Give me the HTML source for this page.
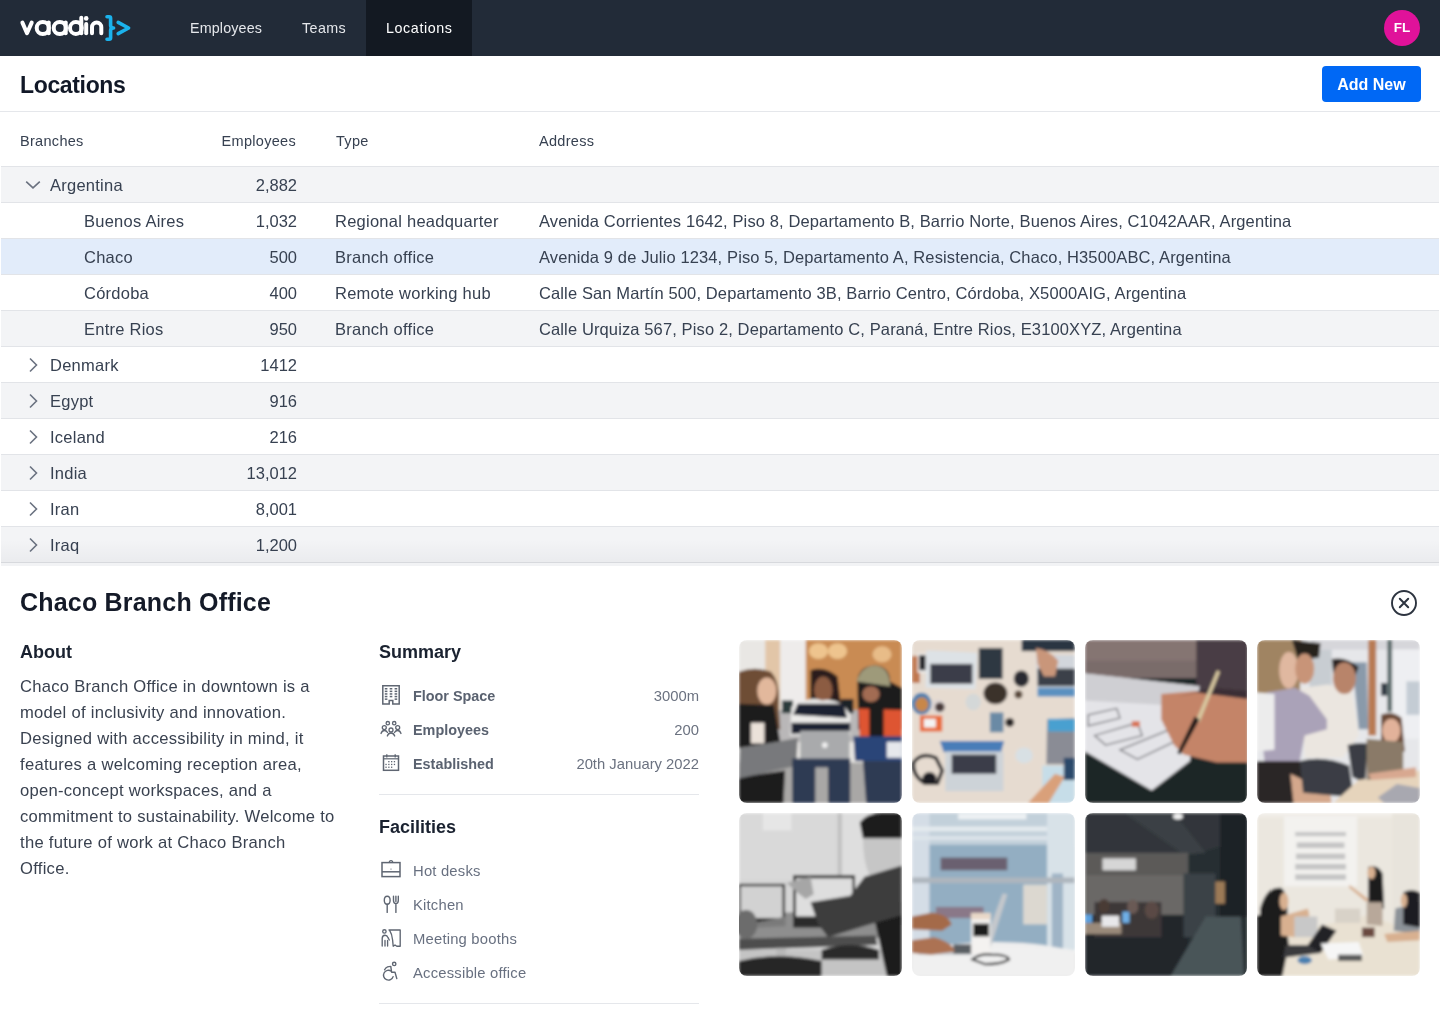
<!DOCTYPE html>
<html><head><meta charset="utf-8">
<style>
*{box-sizing:border-box;margin:0;padding:0}
html,body{width:1440px;height:1024px;overflow:hidden;background:#fff}
body{font-family:"Liberation Sans",sans-serif;color:#1f2937;position:relative}
.abs{position:absolute}
#nav{position:absolute;left:0;top:0;width:1440px;height:56px;background:#222b38}
.tab{position:absolute;top:0;height:56px;line-height:56px;color:#e5e7eb;font-size:14.3px;white-space:nowrap}
.tab.active{background:#131922;color:#fff}
#avatar{position:absolute;left:1384px;top:10px;width:36px;height:36px;border-radius:50%;background:#e0129a;color:#fff;font-size:13.5px;font-weight:700;line-height:36px;text-align:center}
#hdr{position:absolute;left:0;top:56px;width:1440px;height:56px;border-bottom:1px solid #e5e7eb}
#title{position:absolute;left:20px;top:15.5px;font-size:23px;letter-spacing:-0.35px;font-weight:700;color:#111827;white-space:nowrap}
#addnew{position:absolute;left:1322px;top:10px;width:99px;height:36px;border-radius:4px;background:#0068f5;color:#fff;font-size:16px;font-weight:700;line-height:38px;text-align:center}
#thead{position:absolute;left:0;top:112px;width:1440px;height:54px}
.th{position:absolute;top:2px;line-height:54px;font-size:14.5px;letter-spacing:0.3px;color:#374151;white-space:nowrap}
.row{position:absolute;left:1px;width:1438px;height:36px;border-top:1px solid #e2e4e8}
.row.g{background:#f3f4f6}
.row.sel{background:#e2ecfa}
.c{position:absolute;top:1px;line-height:35px;font-size:16.5px;letter-spacing:0.25px;color:#374151;white-space:nowrap}
.num{text-align:right}

#detail{position:absolute;left:0;top:563px;width:1440px;height:461px}
#dtitle{position:absolute;left:20px;top:25px;font-size:25px;letter-spacing:0.2px;font-weight:700;color:#141a28;white-space:nowrap}
.h3{position:absolute;font-size:18px;font-weight:700;color:#1a2230;white-space:nowrap}
#about{position:absolute;left:20px;top:111px;width:340px;font-size:16.6px;letter-spacing:0.27px;line-height:26px;color:#3a4250;white-space:nowrap}
.srow{position:absolute;left:379px;width:320px;height:34px}
.slabel{position:absolute;left:34px;top:1px;font-size:14.4px;font-weight:700;color:#5a6270;white-space:nowrap;line-height:34px}
.sval{position:absolute;right:0px;top:1px;font-size:14.8px;color:#6b7280;white-space:nowrap;line-height:34px}
.flabel{position:absolute;left:34px;top:1px;font-size:14.8px;letter-spacing:0.2px;color:#687080;white-space:nowrap;line-height:34px}
.divider{position:absolute;left:379px;width:320px;height:1px;background:#e5e7eb}
.ph{position:absolute;width:163px;height:163px;border-radius:8px;overflow:hidden}
</style></head>
<body>
<div id="root" style="position:absolute;left:0;top:0;width:1440px;height:1024px;overflow:hidden;will-change:transform">
<div id="nav">
  <svg class="abs" style="left:0;top:0" width="140" height="56" viewBox="0 0 140 56">
<g fill="none" stroke="#fff" stroke-width="4" stroke-linecap="round" stroke-linejoin="round">
<path d="M22.4 22.6 L27 33.2 L31.7 22.6"/>
<circle cx="42.8" cy="28" r="6.1"/><path d="M48.7 22.6 V33.2"/>
<circle cx="59.8" cy="28" r="6.1"/><path d="M65.7 22.6 V33.2"/>
<circle cx="75.9" cy="28" r="5.9"/><path d="M81.3 17.8 V33.2"/>
<path d="M86.2 24 V33.2"/>
<path d="M92 33.2 V27.2 A4.65 4.65 0 0 1 101.3 27.2 V33.2"/>
</g>
<circle cx="86.2" cy="18.4" r="2.3" fill="#fff"/>
<g fill="none" stroke="#1bb2ec" stroke-width="3.6" stroke-linecap="round" stroke-linejoin="round">
<path d="M107 16.8 H109.2 Q110.6 16.8 110.6 18.2 V25.6 Q110.6 28 113.6 28 Q110.6 28 110.6 30.4 V37.8 Q110.6 39.2 109.2 39.2 H107"/>
<path d="M118.2 22.4 L128.6 28 L118.2 33.6"/>
</g></svg>
  <div class="tab" style="left:170px;width:112px;padding-left:20px;letter-spacing:0.15px">Employees</div>
  <div class="tab" style="left:282px;width:84px;padding-left:20px;letter-spacing:0.4px">Teams</div>
  <div class="tab active" style="left:366px;width:106px;padding-left:20px;letter-spacing:0.6px">Locations</div>
  <div id="avatar">FL</div>
</div>
<div id="hdr">
  <div id="title">Locations</div>
  <div id="addnew">Add New</div>
</div>
<div id="thead">
  <div class="th" style="left:20px">Branches</div>
  <div class="th" style="left:196px;width:100px;text-align:right">Employees</div>
  <div class="th" style="left:336px">Type</div>
  <div class="th" style="left:539px">Address</div>
</div>
<div id="rows">
<div class="row g" style="top:166px"><svg class="abs" style="left:23px;top:11.5px" width="18" height="12" viewBox="0 0 18 12"><path d="M2.2 2.6 L9 8.8 L15.8 2.6" fill="none" stroke="#6b7280" stroke-width="1.6"/></svg><div class="c" style="left:49px">Argentina</div><div class="c num" style="left:196px;width:100px;letter-spacing:0">2,882</div></div>
<div class="row " style="top:202px"><div class="c" style="left:83px">Buenos Aires</div><div class="c num" style="left:196px;width:100px;letter-spacing:0">1,032</div><div class="c" style="left:334px">Regional headquarter</div><div class="c" style="left:538px;letter-spacing:0.12px">Avenida Corrientes 1642, Piso 8, Departamento B, Barrio Norte, Buenos Aires, C1042AAR, Argentina</div></div>
<div class="row sel" style="top:238px"><div class="c" style="left:83px">Chaco</div><div class="c num" style="left:196px;width:100px;letter-spacing:0">500</div><div class="c" style="left:334px">Branch office</div><div class="c" style="left:538px;letter-spacing:0.12px">Avenida 9 de Julio 1234, Piso 5, Departamento A, Resistencia, Chaco, H3500ABC, Argentina</div></div>
<div class="row " style="top:274px"><div class="c" style="left:83px">Córdoba</div><div class="c num" style="left:196px;width:100px;letter-spacing:0">400</div><div class="c" style="left:334px">Remote working hub</div><div class="c" style="left:538px;letter-spacing:0.12px">Calle San Martín 500, Departamento 3B, Barrio Centro, Córdoba, X5000AIG, Argentina</div></div>
<div class="row g" style="top:310px"><div class="c" style="left:83px">Entre Rios</div><div class="c num" style="left:196px;width:100px;letter-spacing:0">950</div><div class="c" style="left:334px">Branch office</div><div class="c" style="left:538px;letter-spacing:0.12px">Calle Urquiza 567, Piso 2, Departamento C, Paraná, Entre Rios, E3100XYZ, Argentina</div></div>
<div class="row " style="top:346px"><svg class="abs" style="left:26px;top:8.5px" width="12" height="18" viewBox="0 0 12 18"><path d="M3 2.5 L9.5 9 L3 15.5" fill="none" stroke="#6b7280" stroke-width="1.6"/></svg><div class="c" style="left:49px">Denmark</div><div class="c num" style="left:196px;width:100px;letter-spacing:0">1412</div></div>
<div class="row g" style="top:382px"><svg class="abs" style="left:26px;top:8.5px" width="12" height="18" viewBox="0 0 12 18"><path d="M3 2.5 L9.5 9 L3 15.5" fill="none" stroke="#6b7280" stroke-width="1.6"/></svg><div class="c" style="left:49px">Egypt</div><div class="c num" style="left:196px;width:100px;letter-spacing:0">916</div></div>
<div class="row " style="top:418px"><svg class="abs" style="left:26px;top:8.5px" width="12" height="18" viewBox="0 0 12 18"><path d="M3 2.5 L9.5 9 L3 15.5" fill="none" stroke="#6b7280" stroke-width="1.6"/></svg><div class="c" style="left:49px">Iceland</div><div class="c num" style="left:196px;width:100px;letter-spacing:0">216</div></div>
<div class="row g" style="top:454px"><svg class="abs" style="left:26px;top:8.5px" width="12" height="18" viewBox="0 0 12 18"><path d="M3 2.5 L9.5 9 L3 15.5" fill="none" stroke="#6b7280" stroke-width="1.6"/></svg><div class="c" style="left:49px">India</div><div class="c num" style="left:196px;width:100px;letter-spacing:0">13,012</div></div>
<div class="row " style="top:490px"><svg class="abs" style="left:26px;top:8.5px" width="12" height="18" viewBox="0 0 12 18"><path d="M3 2.5 L9.5 9 L3 15.5" fill="none" stroke="#6b7280" stroke-width="1.6"/></svg><div class="c" style="left:49px">Iran</div><div class="c num" style="left:196px;width:100px;letter-spacing:0">8,001</div></div>
<div class="row g" style="top:526px"><svg class="abs" style="left:26px;top:8.5px" width="12" height="18" viewBox="0 0 12 18"><path d="M3 2.5 L9.5 9 L3 15.5" fill="none" stroke="#6b7280" stroke-width="1.6"/></svg><div class="c" style="left:49px">Iraq</div><div class="c num" style="left:196px;width:100px;letter-spacing:0">1,200</div></div>
<div class="abs" style="left:1px;top:540px;width:1438px;height:22px;background:linear-gradient(rgba(0,0,30,0),rgba(0,0,30,0.035))"></div><div class="abs" style="left:1px;top:562px;width:1438px;height:1px;background:#d7d9dd"></div><div class="abs" style="left:1px;top:563px;width:1438px;height:3px;background:#f2f3f5"></div></div>
<div id="detail">
  <div id="dtitle">Chaco Branch Office</div>
  <svg class="abs" style="left:1390px;top:26px" width="28" height="28" viewBox="0 0 28 28"><circle cx="14" cy="14" r="12" fill="none" stroke="#2d3440" stroke-width="1.9"/><path d="M9.8 9.8 L18.2 18.2 M18.2 9.8 L9.8 18.2" stroke="#2d3440" stroke-width="2" stroke-linecap="round"/></svg>
  <div class="h3" style="left:20px;top:79px">About</div>
  <div id="about">Chaco Branch Office in downtown is a<br>model of inclusivity and innovation.<br>Designed with accessibility in mind, it<br>features a welcoming reception area,<br>open-concept workspaces, and a<br>commitment to sustainability. Welcome to<br>the future of work at Chaco Branch<br>Office.</div>
  <div class="h3" style="left:379px;top:79px">Summary</div>
  <div class="srow" style="top:115px"><div class="slabel">Floor Space</div><div class="sval">3000m</div></div>
  <div class="srow" style="top:149px"><div class="slabel">Employees</div><div class="sval">200</div></div>
  <div class="srow" style="top:183px"><div class="slabel">Established</div><div class="sval">20th January 2022</div></div>
  <div class="divider" style="top:231px"></div>
  <div class="h3" style="left:379px;top:254px">Facilities</div>
  <div class="srow" style="top:290px"><div class="flabel">Hot desks</div></div>
  <div class="srow" style="top:324px"><div class="flabel">Kitchen</div></div>
  <div class="srow" style="top:358px"><div class="flabel">Meeting booths</div></div>
  <div class="srow" style="top:392px"><div class="flabel">Accessible office</div></div>
  <div class="divider" style="top:440px"></div>
  
<svg class="abs" style="left:376px;top:117px" width="30" height="100" viewBox="376 680 30 100">
<g fill="none" stroke="#5f6672" stroke-width="1.5">
<path d="M389.2 704 V700.6 H392.8 V704 H399.2 V685.8 H382.8 V704 Z"/>
</g>
<g fill="#5f6672"><rect x="384.8" y="688" width="2.6" height="1.5"/><rect x="389.7" y="688" width="2.6" height="1.5"/><rect x="394.6" y="688" width="2.6" height="1.5"/><rect x="384.8" y="690.6" width="2.6" height="1.5"/><rect x="389.7" y="690.6" width="2.6" height="1.5"/><rect x="394.6" y="690.6" width="2.6" height="1.5"/><rect x="384.8" y="693.2" width="2.6" height="1.5"/><rect x="389.7" y="693.2" width="2.6" height="1.5"/><rect x="394.6" y="693.2" width="2.6" height="1.5"/><rect x="384.8" y="695.8" width="2.6" height="1.5"/><rect x="389.7" y="695.8" width="2.6" height="1.5"/><rect x="394.6" y="695.8" width="2.6" height="1.5"/><rect x="384.8" y="698.4" width="2.6" height="1.5"/><rect x="394.6" y="698.4" width="2.6" height="1.5"/></g>
<g fill="none" stroke="#5f6672" stroke-width="1.3" stroke-linecap="round">
<circle cx="387.8" cy="723.2" r="1.7"/><circle cx="394.2" cy="723.2" r="1.7"/>
<circle cx="384.3" cy="727.6" r="2"/><circle cx="397.7" cy="727.6" r="2"/><circle cx="391" cy="730" r="2"/>
<path d="M381 733.5 Q382 730.5 384.3 730.5 Q386.5 730.5 387.5 732.5"/>
<path d="M401 733.5 Q400 730.5 397.7 730.5 Q395.5 730.5 394.5 732.5"/>
<path d="M387.3 736 Q388.3 733 391 733 Q393.7 733 394.7 736"/>
</g>
<g fill="none" stroke="#5f6672" stroke-width="1.5">
<rect x="383.5" y="756" width="15" height="14.3"/>
<path d="M383.5 758.8 H398.5" stroke-width="1.2"/>
<path d="M386.8 754.2 V757.5 M395.2 754.2 V757.5" stroke-width="1.3"/>
</g>
<g fill="#5f6672">
<rect x="388.2" y="761" width="1.3" height="1.3"/><rect x="391" y="761" width="1.3" height="1.3"/><rect x="393.8" y="761" width="1.3" height="1.3"/>
<rect x="385.4" y="763.8" width="1.3" height="1.3"/><rect x="388.2" y="763.8" width="1.3" height="1.3"/><rect x="391" y="763.8" width="1.3" height="1.3"/><rect x="393.8" y="763.8" width="1.3" height="1.3"/>
<rect x="385.4" y="766.6" width="1.3" height="1.3"/><rect x="388.2" y="766.6" width="1.3" height="1.3"/><rect x="391" y="766.6" width="1.3" height="1.3"/>
</g>
</svg>
<svg class="abs" style="left:376px;top:292px" width="30" height="135" viewBox="376 855 30 135">
<g fill="none" stroke="#5f6672" stroke-width="1.5" stroke-linejoin="miter">
<rect x="382" y="862.6" width="18" height="14"/>
<path d="M382 871.8 H400"/>
<path d="M389.3 862.6 Q389.3 860.6 391 860.6 Q392.7 860.6 392.7 862.6" stroke-width="1.3"/>
</g>
<rect x="390.5" y="868.6" width="1" height="1" fill="#5f6672"/>
<g fill="none" stroke="#5f6672" stroke-width="1.4" stroke-linecap="round" stroke-linejoin="round">
<ellipse cx="387.2" cy="900.3" rx="2.9" ry="4"/>
<path d="M387.2 904.3 V912.4"/>
<path d="M395.9 903.6 V912.4 M393.5 896.3 V900.6 Q393.5 903.6 395.9 903.6 Q398.3 903.6 398.3 900.6 V896.3 M395.9 896.3 V901.5"/>
</g>
<g fill="none" stroke="#5f6672" stroke-width="1.35" stroke-linecap="round" stroke-linejoin="round">
<circle cx="384.4" cy="931.4" r="1.7"/>
<path d="M382.2 946 V938.5 Q382.2 935.2 385 935.2 Q387.2 935.2 388 937.6 L389.3 940"/>
<path d="M385 940.5 V946 M387.6 940.5 V946"/>
<path d="M389 930 H400.2 V946.2 H396.8 L395 945 L393.2 946.2 L392.6 940 Q392 934 389.5 930.2"/>
</g>
<g fill="none" stroke="#5f6672" stroke-width="1.4" stroke-linecap="round" stroke-linejoin="round">
<circle cx="394.2" cy="963.9" r="1.7"/>
<path d="M384.6 969.8 Q386.2 966.4 390.6 966.4"/>
<path d="M390.8 966.6 L391.6 972.2 H395 L396.8 978.6"/>
<path d="M391.3 971.2 A4.9 4.9 0 1 0 393.1 976.6"/>
</g>
</svg>
<div id="photos">
<div class="ph" style="left:739px;top:77px;width:162.75px"><svg width="100%" height="100%" viewBox="0 0 1024 1024" preserveAspectRatio="none"><defs><filter id="b0" x="-5%" y="-5%" width="110%" height="110%"><feGaussianBlur stdDeviation="9"/></filter></defs><g filter="url(#b0)"><rect width="1024" height="1024" fill="#e9e7e4"/>
<rect x="165" y="0" width="95" height="450" fill="#e2c6a8"/>
<rect x="260" y="0" width="160" height="450" fill="#eeeceb"/>
<rect x="420" y="0" width="604" height="460" fill="#c98b52"/>
<ellipse cx="500" cy="70" rx="60" ry="50" fill="#eec48e"/>
<ellipse cx="620" cy="70" rx="60" ry="50" fill="#eec48e"/>
<ellipse cx="900" cy="90" rx="60" ry="50" fill="#e8bc88"/>
<rect x="240" y="440" width="540" height="200" fill="#b9b7b8"/>
<rect x="270" y="380" width="70" height="80" fill="#2c3a3a"/>
<rect x="640" y="370" width="80" height="90" fill="#1e2226"/>
<rect x="0" y="770" width="1024" height="254" fill="#a9a7a6"/>
<path d="M0 200 Q100 160 200 200 Q260 260 250 420 L260 560 L0 560 Z" fill="#6e4d36"/>
<ellipse cx="175" cy="320" rx="60" ry="85" fill="#e2b89c"/>
<path d="M0 400 L220 410 L260 640 L0 680 Z" fill="#1f1c1e"/>
<rect x="75" y="520" width="85" height="130" fill="#ebe2d9"/>
<path d="M0 860 L290 820 L280 1024 L0 1024 Z" fill="#1d1b1f"/>
<path d="M5 680 L370 615 L360 790 L0 870 Z" fill="#78797c"/>
<path d="M450 190 Q540 160 620 230 L640 400 L450 400 Z" fill="#2a1f1a"/>
<ellipse cx="530" cy="315" rx="58" ry="85" fill="#8c5c42"/>
<path d="M330 420 Q440 350 520 380 Q640 360 700 470 L700 600 L320 600 Z" fill="#ecebe9"/>
<path d="M370 400 L660 400 L680 490 L340 470 Z" fill="#1e2030"/>
<path d="M330 520 L700 520 L700 570 L330 590 Z" fill="#1e2030"/>
<rect x="385" y="570" width="310" height="175" fill="#a9aaac"/>
<circle cx="540" cy="660" r="18" fill="#f0f0f0"/>
<path d="M335 745 L700 745 L700 1024 L335 1024 Z" fill="#2f3a52"/><rect x="480" y="800" width="80" height="224" fill="#a9a7a6"/>
<path d="M745 250 Q760 160 860 160 Q950 170 950 260 L1024 300 L1024 560 L750 560 Z" fill="#1c1a1c"/>
<path d="M740 260 Q770 160 860 160 Q950 170 950 290 Z" fill="#9e9a7a"/>
<ellipse cx="830" cy="340" rx="55" ry="50" fill="#a26c52"/>
<path d="M750 430 L1024 440 L1024 610 L760 610 Z" fill="#de5530"/>
<rect x="820" y="420" width="90" height="190" fill="#1a1a1c"/>
<path d="M720 605 L1024 605 L1024 765 L730 760 Z" fill="#2c4578"/>
<rect x="930" y="640" width="94" height="100" fill="#e6e8ec"/>
<path d="M780 760 L1024 760 L1024 1024 L800 1024 Z" fill="#2f3a52"/>
</g></svg></div>
<div class="ph" style="left:911.75px;top:77px;width:162.75px"><svg width="100%" height="100%" viewBox="0 0 1024 1024" preserveAspectRatio="none"><defs><filter id="b1" x="-5%" y="-5%" width="110%" height="110%"><feGaussianBlur stdDeviation="9"/></filter></defs><g filter="url(#b1)"><rect width="1024" height="1024" fill="#e6dbd0"/>
<rect x="690" y="0" width="334" height="70" fill="#2c3442"/>
<rect x="0" y="100" width="50" height="170" fill="#c07850"/>
<rect x="35" y="85" width="60" height="120" fill="#f0f0f0"/>
<rect x="45" y="95" width="40" height="95" fill="#222428"/>
<path d="M90 65 L410 80 L400 310 L85 300 Z" fill="#dde2e6"/>
<rect x="115" y="150" width="265" height="125" fill="#3a3e48"/>
<rect x="420" y="50" width="150" height="195" fill="#2e3742"/>
<ellipse cx="525" cy="335" rx="75" ry="68" fill="#3a302c"/>
<ellipse cx="688" cy="243" rx="48" ry="52" fill="#2a2a30"/>
<ellipse cx="670" cy="343" rx="25" ry="25" fill="#5a4a3a"/>
<path d="M780 95 L1024 95 L1024 360 L790 350 Z" fill="#d2d6dc"/>
<rect x="790" y="180" width="234" height="110" fill="#3a3f4a"/>
<rect x="790" y="300" width="234" height="55" fill="#5a90c0"/>
<path d="M780 50 Q860 60 920 130 L900 230 L830 230 L790 150 Z" fill="#c9967a"/>
<ellipse cx="385" cy="390" rx="48" ry="52" fill="#d4d8d8"/>
<ellipse cx="60" cy="400" rx="62" ry="68" fill="#4a7fb0"/>
<ellipse cx="62" cy="405" rx="42" ry="45" fill="#c8874a"/>
<ellipse cx="165" cy="418" rx="45" ry="45" fill="#ded6d4"/>
<ellipse cx="175" cy="422" rx="30" ry="30" fill="#4a3a3a"/>
<rect x="50" y="475" width="140" height="100" fill="#e86a38"/>
<rect x="75" y="495" width="75" height="55" fill="#f4f4f4"/>
<rect x="490" y="455" width="85" height="125" fill="#6a8aa5"/>
<ellipse cx="615" cy="518" rx="28" ry="28" fill="#2a2626"/>
<path d="M175 635 L580 635 L560 705 L200 705 Z" fill="#4a7db8"/>
<rect x="210" y="700" width="365" height="250" fill="#cdd3d8"/>
<rect x="250" y="720" width="280" height="120" fill="#3a3e48"/>
<path d="M10 770 Q60 700 150 740 L190 820 L160 900 L80 900 Q0 850 10 770 Z" fill="none" stroke="#1e1e20" stroke-width="22"/>
<ellipse cx="110" cy="870" rx="45" ry="40" fill="#1e1e20"/>
<path d="M850 500 L1024 490 L1024 780 L845 780 Z" fill="#8a8c95"/>
<rect x="855" y="495" width="169" height="80" fill="#4aa0d0"/>
<rect x="820" y="790" width="204" height="234" fill="#c6dde8"/>
<path d="M730 1024 L900 840 L960 860 L860 1024 Z" fill="#d9a07a"/>
<rect x="955" y="740" width="69" height="140" fill="#2a4a6a"/>
<ellipse cx="705" cy="725" rx="55" ry="50" fill="#d8e0e4"/>
</g></svg></div>
<div class="ph" style="left:1084.5px;top:77px;width:162.75px"><svg width="100%" height="100%" viewBox="0 0 1024 1024" preserveAspectRatio="none"><defs><filter id="b2" x="-5%" y="-5%" width="110%" height="110%"><feGaussianBlur stdDeviation="9"/></filter></defs><g filter="url(#b2)"><rect width="1024" height="1024" fill="#1f2528"/>
<rect x="0" y="0" width="1024" height="240" fill="#7a6c6a"/>
<rect x="0" y="0" width="700" height="130" fill="#857572"/>
<rect x="700" y="0" width="324" height="360" fill="#4a3c44"/>
<path d="M0 210 L720 290 L660 760 L420 945 L0 700 Z" fill="#e4e4e8"/>
<path d="M0 210 L720 290 L700 420 L0 380 Z" fill="#cfcfd3"/>
<g fill="none" stroke="#6a6a70" stroke-width="8">
<path d="M60 600 L330 520 L360 600 L130 660 Z"/>
<path d="M220 690 L540 560 L560 640 L330 750 Z"/>
<path d="M20 470 L200 430 L220 490 L20 540 Z"/>
</g>
<rect x="295" y="510" width="50" height="35" fill="#d87050"/>
<path d="M480 340 L700 320 L1024 330 L1024 770 L830 770 L620 720 L560 660 L480 500 Z" fill="#c48468"/>
<path d="M580 360 L800 300 L1024 320 L1024 370 L700 330 Z" fill="#3a2e36"/>
<path d="M850 200 L720 520 L700 500 L830 190 Z" fill="#d8c8a0"/>
<path d="M720 500 L600 720 L580 710 L690 480 Z" fill="#121418"/>
</g></svg></div>
<div class="ph" style="left:1257.25px;top:77px;width:162.75px"><svg width="100%" height="100%" viewBox="0 0 1024 1024" preserveAspectRatio="none"><defs><filter id="b3" x="-5%" y="-5%" width="110%" height="110%"><feGaussianBlur stdDeviation="9"/></filter></defs><g filter="url(#b3)"><rect width="1024" height="1024" fill="#e6e7ea"/>
<rect x="340" y="0" width="684" height="60" fill="#d6d6da"/>
<rect x="850" y="60" width="174" height="560" fill="#eeeff2"/>
<rect x="940" y="260" width="84" height="210" fill="#c4ccd4"/>
<rect x="780" y="270" width="40" height="80" fill="#303a44"/>
<path d="M600 140 L690 140 L700 560 L640 560 Z" fill="#8a9aaa"/>
<rect x="820" y="0" width="30" height="450" fill="#5a6a6a"/>
<rect x="700" y="0" width="50" height="600" fill="#b87a52"/>
<rect x="330" y="60" width="140" height="240" fill="#c8cdd2"/>
<path d="M0 0 L280 0 L270 330 L0 340 Z" fill="#a08462"/>
<ellipse cx="200" cy="190" rx="60" ry="115" fill="#e0b8a0"/>
<path d="M220 0 L400 20 L390 110 L260 130 Z" fill="#26221e"/>
<ellipse cx="300" cy="180" rx="60" ry="95" fill="#c89478"/>
<path d="M280 300 L450 280 L600 330 L640 600 L540 740 L300 740 Z" fill="#ebe6e0"/>
<path d="M470 120 Q560 100 640 170 L620 220 L480 210 Z" fill="#2a2420"/>
<ellipse cx="550" cy="240" rx="72" ry="100" fill="#b8846a"/>
<path d="M60 330 L240 300 L330 350 L440 500 L440 560 L300 600 L250 860 L60 860 L40 700 Z" fill="#aaa2b8"/>
<path d="M0 330 L110 340 L110 690 L0 700 Z" fill="#ececec"/>
<path d="M0 760 L300 760 L320 1024 L0 1024 Z" fill="#2a2628"/>
<path d="M210 840 L460 960 L470 1024 L230 1024 Z" fill="#d4a88c"/>
<path d="M270 760 Q420 720 580 790 L610 990 L290 960 Z" fill="#3a3e44"/>
<path d="M570 660 Q630 640 700 650 L680 900 L600 860 Z" fill="#3a3e44"/>
<path d="M480 1024 L640 880 L1024 820 L1024 1024 Z" fill="#e6d4bc"/>
<path d="M780 470 Q850 440 910 490 L930 700 L780 700 Z" fill="#6a4a38"/>
<ellipse cx="845" cy="570" rx="58" ry="75" fill="#e2b29a"/>
<path d="M690 620 L920 640 L920 850 L690 880 Z" fill="#8a7a68"/>
<path d="M700 840 L1000 800 L1000 860 L720 880 Z" fill="#d8a890"/>
<path d="M760 990 L880 905 L1024 930 L1024 1024 L800 1024 Z" fill="#a8a8b0"/>
</g></svg></div>
<div class="ph" style="left:739px;top:250px;width:162.75px"><svg width="100%" height="100%" viewBox="0 0 1024 1024" preserveAspectRatio="none"><defs><filter id="b4" x="-5%" y="-5%" width="110%" height="110%"><feGaussianBlur stdDeviation="9"/></filter></defs><g filter="url(#b4)"><rect width="1024" height="1024" fill="#d6d6d6"/>
<rect x="0" y="0" width="620" height="420" fill="#d9d9d9"/>
<rect x="150" y="0" width="180" height="110" fill="#e6e6e6"/>
<rect x="620" y="0" width="28" height="400" fill="#c2c2c2"/>
<rect x="648" y="0" width="376" height="450" fill="#dedede"/>
<rect x="0" y="860" width="1024" height="164" fill="#c4c4c4"/>
<path d="M0 640 L820 600 L1024 560 L1024 700 L860 790 L0 800 Z" fill="#8e8e8e"/>
<path d="M0 790 L860 770 L870 830 L0 860 Z" fill="#4e4e4e"/>
<rect x="235" y="850" width="60" height="174" fill="#b8b8b8"/>
<path d="M0 930 Q250 870 520 930 L520 1024 L0 1024 Z" fill="#262626"/>
<path d="M520 860 Q700 800 880 860 L880 920 L520 920 Z" fill="#2c2c2c"/>
<path d="M850 660 L1024 640 L1024 1024 L930 1024 Z" fill="#1e1e1e"/>
<rect x="0" y="445" width="290" height="265" fill="#262626"/>
<rect x="12" y="460" width="262" height="200" fill="#d2d2d2"/>
<path d="M100 690 L290 650 L290 710 L110 720 Z" fill="#7a7a7a"/>
<rect x="340" y="390" width="390" height="330" fill="#2a2a2a"/>
<rect x="358" y="410" width="356" height="240" fill="#dedede"/>
<path d="M760 60 Q800 0 900 0 L1024 0 L1024 160 L780 160 Z" fill="#1c1c1c"/>
<path d="M780 160 L1024 160 L1024 340 L900 400 L820 390 Q780 300 780 160 Z" fill="#c6c6c6"/>
<path d="M790 400 L1024 330 L1024 640 L820 700 L560 780 L500 700 L450 560 L700 520 Z" fill="#3e3e3e"/>
<path d="M300 440 L450 400 L470 510 L420 540 L380 510 Z" fill="#a6a6a6"/>
<ellipse cx="45" cy="700" rx="70" ry="90" fill="#6c6c6c"/>
</g></svg></div>
<div class="ph" style="left:911.75px;top:250px;width:162.75px"><svg width="100%" height="100%" viewBox="0 0 1024 1024" preserveAspectRatio="none"><defs><filter id="b5" x="-5%" y="-5%" width="110%" height="110%"><feGaussianBlur stdDeviation="9"/></filter></defs><g filter="url(#b5)"><rect width="1024" height="1024" fill="#93aec2"/>
<rect x="0" y="0" width="1024" height="200" fill="#c2d0da"/>
<rect x="0" y="0" width="110" height="1024" fill="#d4dde6"/>
<rect x="850" y="0" width="174" height="1024" fill="#d8e2e8"/>
<rect x="880" y="380" width="70" height="480" fill="#9fb4c6"/>
<rect x="290" y="5" width="430" height="35" fill="#eef2f4"/>
<rect x="0" y="85" width="850" height="30" fill="#e4eaee"/>
<rect x="0" y="145" width="850" height="25" fill="#dde4ea"/>
<rect x="180" y="280" width="420" height="80" fill="#6a6070"/>
<rect x="0" y="405" width="1024" height="35" fill="#aeb6be"/>
<rect x="700" y="450" width="150" height="250" fill="#dcd8d0"/>
<rect x="150" y="590" width="300" height="70" fill="#8a7888"/>
<ellipse cx="520" cy="960" rx="620" ry="150" fill="#eeeeee"/>
<path d="M0 1024 L0 900 Q500 800 1024 860 L1024 1024 Z" fill="#f0f0f0"/>
<path d="M40 890 L480 890 L600 510 L570 505 L450 830 L40 850 Z" fill="#c4c8cc"/>
<rect x="260" y="825" width="220" height="60" fill="#5a5e64"/>
<rect x="372" y="628" width="122" height="262" fill="#f4f2f0"/>
<rect x="372" y="628" width="122" height="40" fill="#e8d8c8"/>
<rect x="385" y="695" width="100" height="80" fill="#1a1a1a"/>
<path d="M0 650 L130 625 Q230 640 250 700 L190 740 L0 730 Z" fill="#a46a4a"/>
<path d="M0 800 L140 780 Q250 810 270 870 L120 890 L0 880 Z" fill="#ac7252"/>
<path d="M380 920 Q430 880 500 890 Q600 890 610 920 Q560 950 460 950 Z" fill="none" stroke="#2a2a2c" stroke-width="14"/>
</g></svg></div>
<div class="ph" style="left:1084.5px;top:250px;width:162.75px"><svg width="100%" height="100%" viewBox="0 0 1024 1024" preserveAspectRatio="none"><defs><filter id="b6" x="-5%" y="-5%" width="110%" height="110%"><feGaussianBlur stdDeviation="9"/></filter></defs><g filter="url(#b6)"><rect width="1024" height="1024" fill="#272e33"/>
<path d="M0 0 L1024 0 L1024 160 L680 260 L0 260 Z" fill="#30363a"/>
<path d="M250 0 L560 0 L760 250 L620 260 Z" fill="#3a4044"/>
<rect x="0" y="250" width="650" height="400" fill="#5c5a58"/>
<rect x="10" y="390" width="610" height="250" fill="#6a6866"/>
<rect x="110" y="285" width="210" height="75" fill="#d6d6d6"/>
<rect x="0" y="640" width="650" height="384" fill="#22282c"/>
<rect x="620" y="380" width="200" height="400" fill="#3a4246"/>
<path d="M540 1024 L760 650 L980 650 L1000 1024 Z" fill="#4a5458"/>
<rect x="850" y="0" width="174" height="650" fill="#1a2226"/>
<rect x="820" y="430" width="60" height="140" fill="#9c7a56"/>
<ellipse cx="585" cy="22" rx="32" ry="18" fill="#f4f4f4"/>
<rect x="60" y="560" width="420" height="220" fill="#3c3838"/>
<rect x="0" y="690" width="230" height="70" fill="#9a8a7a"/>
<rect x="105" y="645" width="110" height="70" fill="#e8e8ea"/>
<rect x="0" y="638" width="45" height="52" fill="#5aa0e0"/>
<rect x="235" y="620" width="45" height="70" fill="#70b0e8"/>
<ellipse cx="120" cy="585" rx="35" ry="45" fill="#4a3a34"/>
<ellipse cx="300" cy="590" rx="35" ry="45" fill="#6a5a54"/>
<ellipse cx="420" cy="610" rx="45" ry="55" fill="#5a4a44"/>
</g></svg></div>
<div class="ph" style="left:1257.25px;top:250px;width:162.75px"><svg width="100%" height="100%" viewBox="0 0 1024 1024" preserveAspectRatio="none"><defs><filter id="b7" x="-5%" y="-5%" width="110%" height="110%"><feGaussianBlur stdDeviation="9"/></filter></defs><g filter="url(#b7)"><rect width="1024" height="1024" fill="#ebe7df"/>
<rect x="0" y="0" width="1024" height="30" fill="#f0ece6"/>
<rect x="170" y="20" width="460" height="440" fill="#f3f2ef"/>
<g fill="#c4c4c4">
<rect x="240" y="120" width="320" height="25"/><rect x="250" y="185" width="300" height="35"/>
<rect x="245" y="255" width="310" height="35"/><rect x="240" y="320" width="320" height="35"/><rect x="240" y="385" width="320" height="35"/>
</g>
<rect x="850" y="0" width="174" height="700" fill="#e8e4dc"/>
<path d="M160 1024 L160 760 L700 640 L1024 760 L1024 1024 Z" fill="#e9e1d2"/>
<rect x="490" y="600" width="160" height="90" fill="#d8d2c8"/>
<path d="M700 340 Q760 320 790 380 L800 600 L700 580 Z" fill="#1a1a1e"/>
<ellipse cx="720" cy="375" rx="25" ry="40" fill="#d8b090"/>
<path d="M690 560 L790 560 L790 710 L690 700 Z" fill="#b8a89a"/>
<path d="M580 450 L700 540 L690 560 L580 470 Z" fill="#d8b090"/>
<path d="M870 600 L1024 560 L1024 760 L860 740 Z" fill="#8c9298"/>
<path d="M920 500 Q970 470 1024 500 L1024 720 L920 700 Z" fill="#1c1c20"/>
<ellipse cx="925" cy="550" rx="20" ry="45" fill="#d8b090"/>
<path d="M800 760 L1024 740 L1024 800 L820 810 Z" fill="#d8b090"/>
<path d="M20 600 Q60 460 150 470 Q200 500 190 660 L20 680 Z" fill="#1a1a1e"/>
<ellipse cx="170" cy="555" rx="28" ry="55" fill="#d8b090"/>
<path d="M0 640 L180 640 L200 830 L160 1024 L0 1024 Z" fill="#1a1a1e"/>
<path d="M150 650 L320 600 L330 640 L240 780 L150 770 Z" fill="#d8b090"/>
<path d="M235 650 L380 650 L380 780 L235 780 Z" fill="#c8c8c8"/>
<path d="M165 910 L400 880 L410 830 L180 830 Z" fill="#3a3a3e"/><path d="M320 830 L400 880 L500 740 L410 700 Z" fill="#242428"/>
<path d="M400 820 L640 810 L670 900 L450 920 Z" fill="#f6f6f6"/>
<ellipse cx="300" cy="925" rx="45" ry="25" fill="#4a80b0"/>
<rect x="510" y="890" width="150" height="40" fill="#5a5a5a"/>
<rect x="660" y="720" width="80" height="60" fill="#6a4a40"/>
</g></svg></div>
</div>
</div>
</body></html>
